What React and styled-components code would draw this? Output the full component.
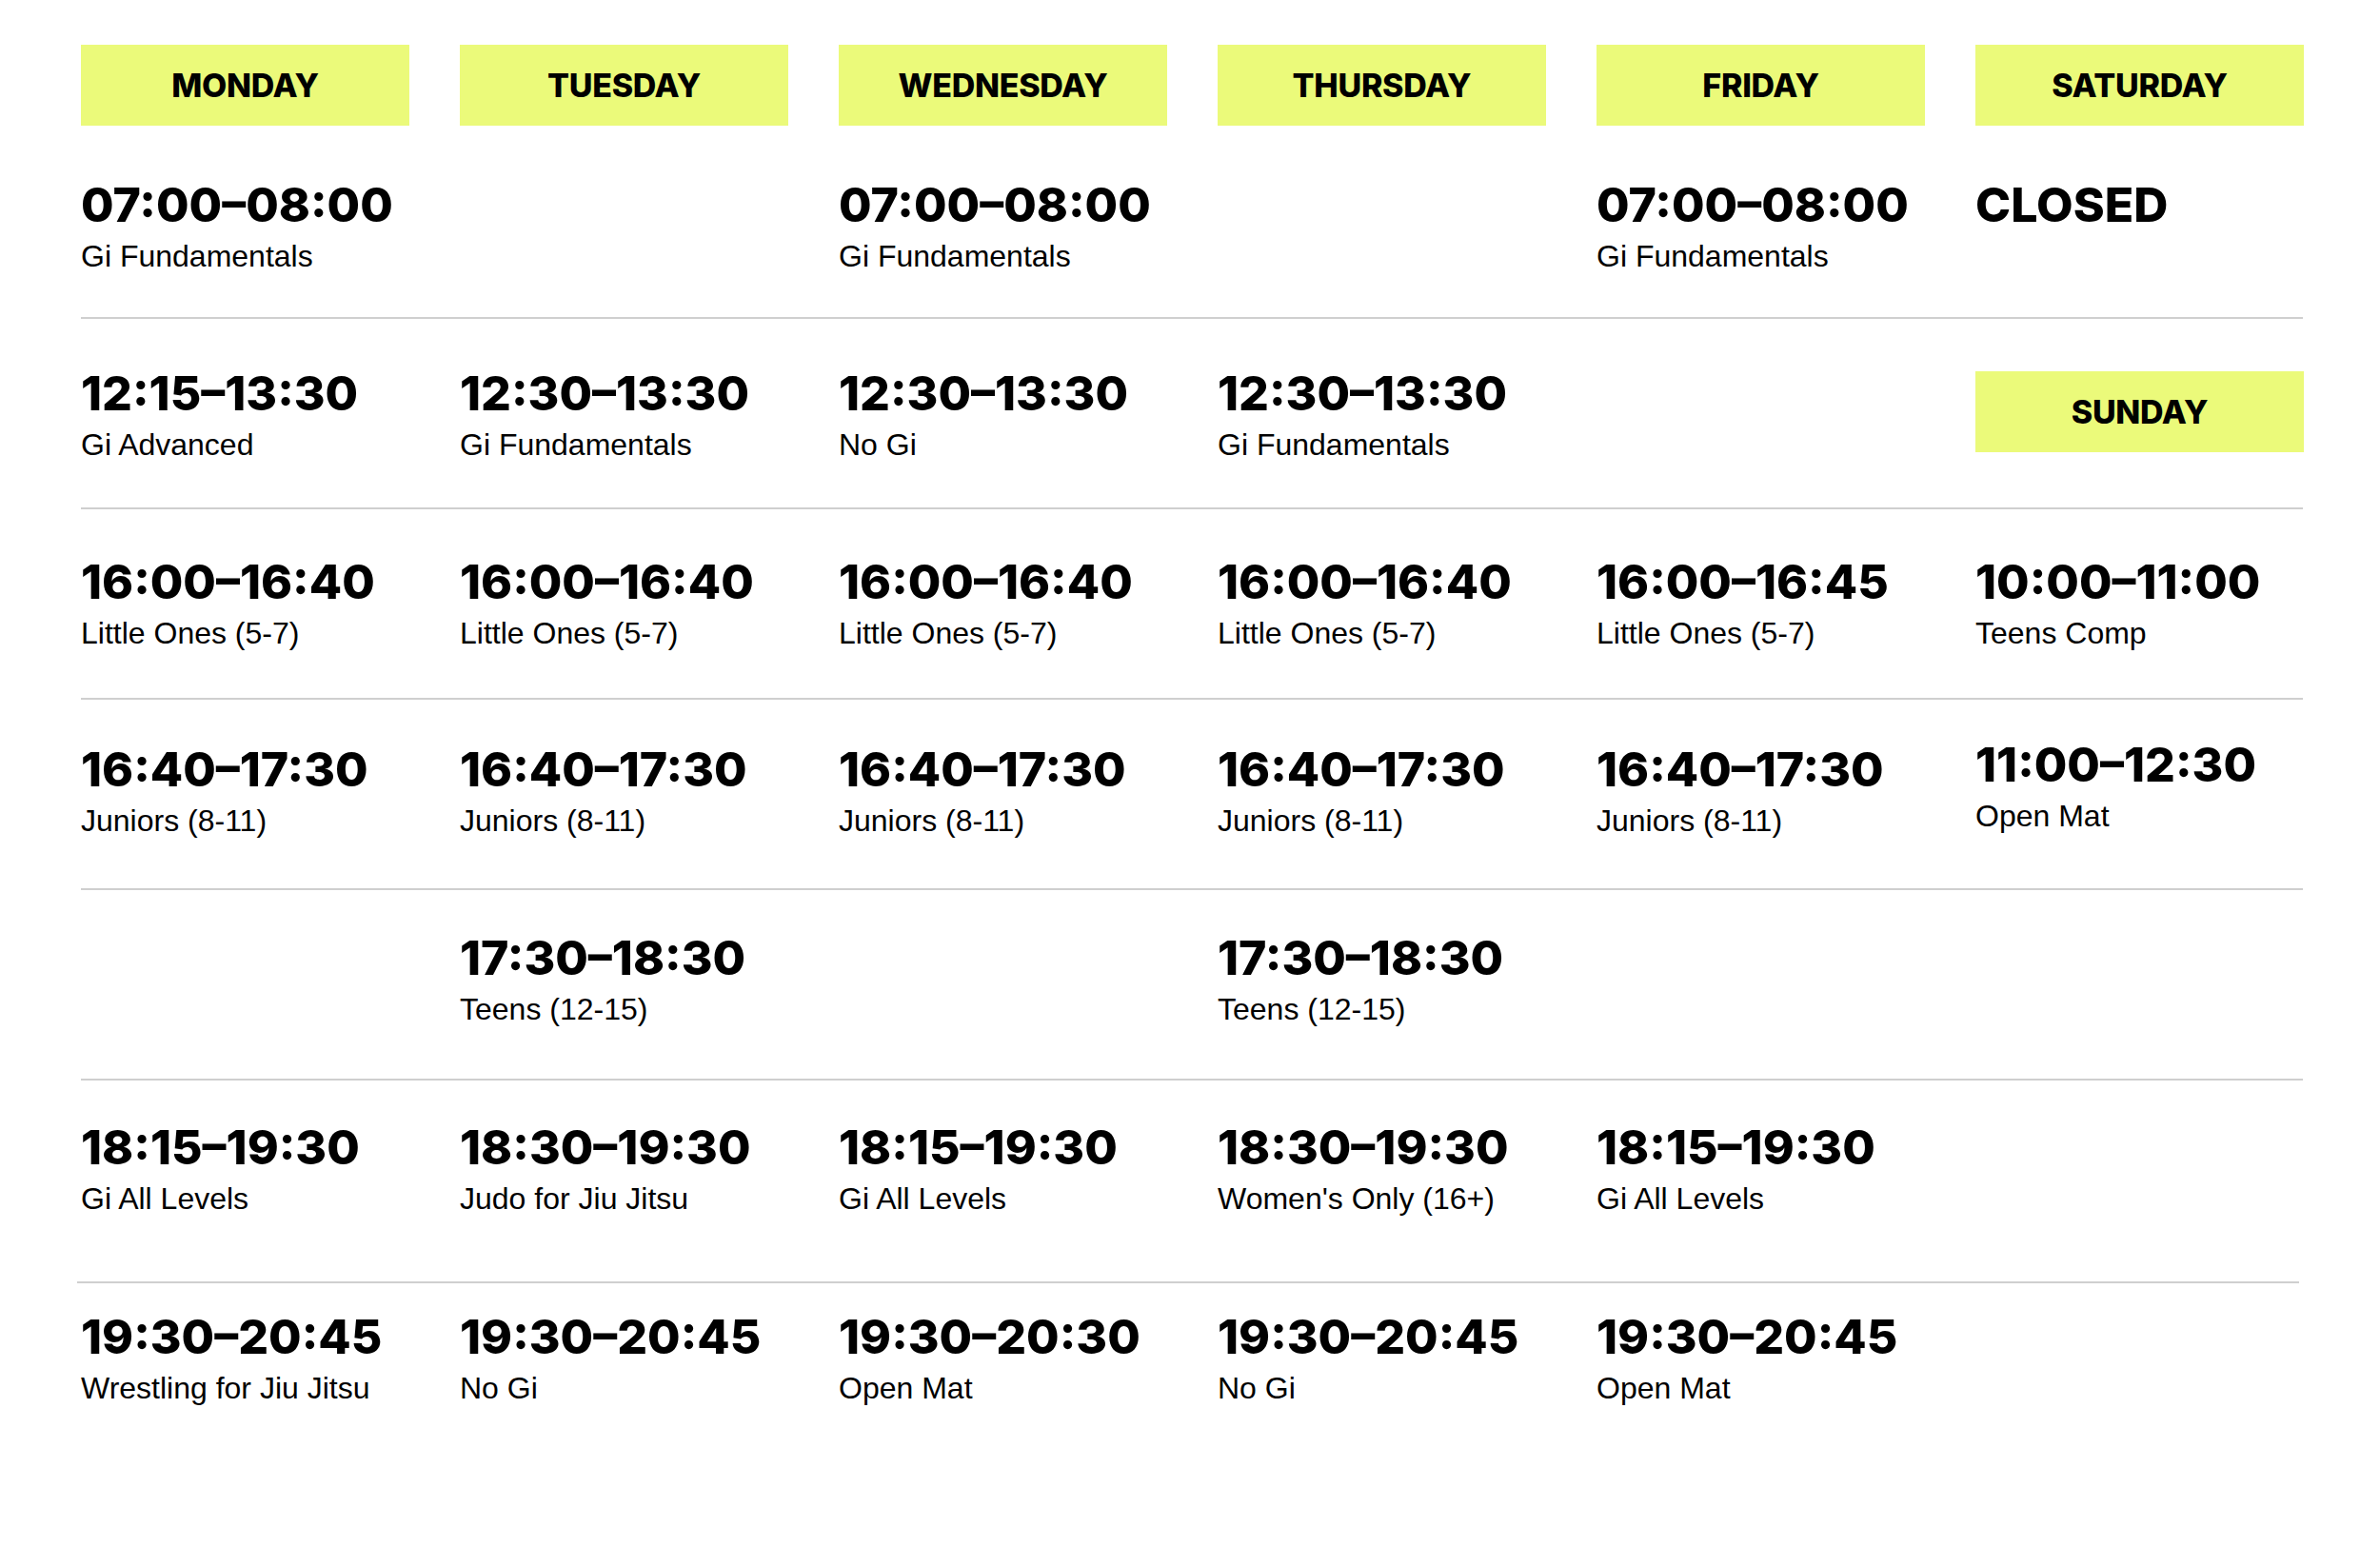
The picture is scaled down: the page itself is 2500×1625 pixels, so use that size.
import React from "react";
import styled, { createGlobalStyle } from "styled-components";

const GlobalStyle = createGlobalStyle`
  html, body { margin: 0; padding: 0; background: #ffffff; }
  body { font-family: "Liberation Sans", Arial, Helvetica, sans-serif; color: #000; }
`;

const Schedule = styled.div`
  padding: 47px 0 0 85px;
  width: 2334px;
`;

const Columns = styled.div`
  display: grid;
  grid-template-columns: repeat(6, 345px);
  column-gap: 53px;
`;

const HeaderRow = styled(Columns)`
  margin-bottom: 3px;
`;

const DayHeader = styled.div`
  height: 85px;
  background: #ebfa7a;
  display: flex;
  align-items: center;
  justify-content: center;
  font-family: Inter, "Liberation Sans", Arial, sans-serif;
  font-weight: 800;
  font-size: 34px;
  letter-spacing: -0.3px;
  text-transform: uppercase;
`;

const Row = styled(Columns)`
  box-sizing: border-box;
  align-items: start;
  height: ${(p) => (p.$tall ? 213 : 200)}px;
  padding-top: ${(p) => p.$offset}px;
  border-bottom: ${(p) => (p.$last ? "none" : "2px solid #cfcfcf")};
  margin-top: ${(p) => (p.$pull ? -13 : 0)}px;
  ${(p) => (p.$tall ? "margin-left: -4px; padding-left: 4px; margin-right: 4px;" : "")}
`;

const Cell = styled.div`
  margin-top: ${(p) => (p.$raise ? -5 : 0)}px;
  display: flex;
  flex-direction: column;
  align-items: flex-start;
`;

const HeaderCell = styled.div`
  margin-top: 2px;
`;

const Time = styled.div`
  font-family: Inter, "Liberation Sans", Arial, sans-serif;
  font-weight: 800;
  font-size: 50px;
  line-height: 50px;
  letter-spacing: 0;
  white-space: nowrap;
`;

const ClassName = styled.div`
  margin-top: 13px;
  font-size: 32px;
  line-height: 32px;
  white-space: nowrap;
`;

const DAYS = ["Monday", "Tuesday", "Wednesday", "Thursday", "Friday", "Saturday"];

const OFFSETS = [55, 53, 51, 48, 46, 45, 44];

const ROWS = [
  [
    ["07:00–08:00", "Gi Fundamentals"],
    null,
    ["07:00–08:00", "Gi Fundamentals"],
    null,
    ["07:00–08:00", "Gi Fundamentals"],
    { closed: true },
  ],
  [
    ["12:15–13:30", "Gi Advanced"],
    ["12:30–13:30", "Gi Fundamentals"],
    ["12:30–13:30", "No Gi"],
    ["12:30–13:30", "Gi Fundamentals"],
    null,
    { header: "Sunday" },
  ],
  [
    ["16:00–16:40", "Little Ones (5-7)"],
    ["16:00–16:40", "Little Ones (5-7)"],
    ["16:00–16:40", "Little Ones (5-7)"],
    ["16:00–16:40", "Little Ones (5-7)"],
    ["16:00–16:45", "Little Ones (5-7)"],
    ["10:00–11:00", "Teens Comp"],
  ],
  [
    ["16:40–17:30", "Juniors (8-11)"],
    ["16:40–17:30", "Juniors (8-11)"],
    ["16:40–17:30", "Juniors (8-11)"],
    ["16:40–17:30", "Juniors (8-11)"],
    ["16:40–17:30", "Juniors (8-11)"],
    { time: "11:00–12:30", name: "Open Mat", raise: true },
  ],
  [
    null,
    ["17:30–18:30", "Teens (12-15)"],
    null,
    ["17:30–18:30", "Teens (12-15)"],
    null,
    null,
  ],
  [
    ["18:15–19:30", "Gi All Levels"],
    ["18:30–19:30", "Judo for Jiu Jitsu"],
    ["18:15–19:30", "Gi All Levels"],
    ["18:30–19:30", "Women's Only (16+)"],
    ["18:15–19:30", "Gi All Levels"],
    null,
  ],
  [
    ["19:30–20:45", "Wrestling for Jiu Jitsu"],
    ["19:30–20:45", "No Gi"],
    ["19:30–20:30", "Open Mat"],
    ["19:30–20:45", "No Gi"],
    ["19:30–20:45", "Open Mat"],
    null,
  ],
];

function renderCell(c, i) {
  if (!c) return <Cell key={i} />;
  if (Array.isArray(c)) {
    return (
      <Cell key={i}>
        <Time>{c[0]}</Time>
        <ClassName>{c[1]}</ClassName>
      </Cell>
    );
  }
  if (c.closed) {
    return (
      <Cell key={i}>
        <Time>CLOSED</Time>
      </Cell>
    );
  }
  if (c.header) {
    return (
      <HeaderCell key={i}>
        <DayHeader>{c.header}</DayHeader>
      </HeaderCell>
    );
  }
  return (
    <Cell key={i} $raise={c.raise}>
      <Time>{c.time}</Time>
      <ClassName>{c.name}</ClassName>
    </Cell>
  );
}

export default function App() {
  return (
    <>
      <GlobalStyle />
      <Schedule>
        <HeaderRow>
          {DAYS.map((d) => (
            <DayHeader key={d}>{d}</DayHeader>
          ))}
        </HeaderRow>
        {ROWS.map((row, r) => (
          <Row
            key={r}
            $offset={OFFSETS[r]}
            $tall={r === ROWS.length - 2}
            $last={r === ROWS.length - 1}
            $pull={r === ROWS.length - 1}
          >
            {row.map(renderCell)}
          </Row>
        ))}
      </Schedule>
    </>
  );
}
